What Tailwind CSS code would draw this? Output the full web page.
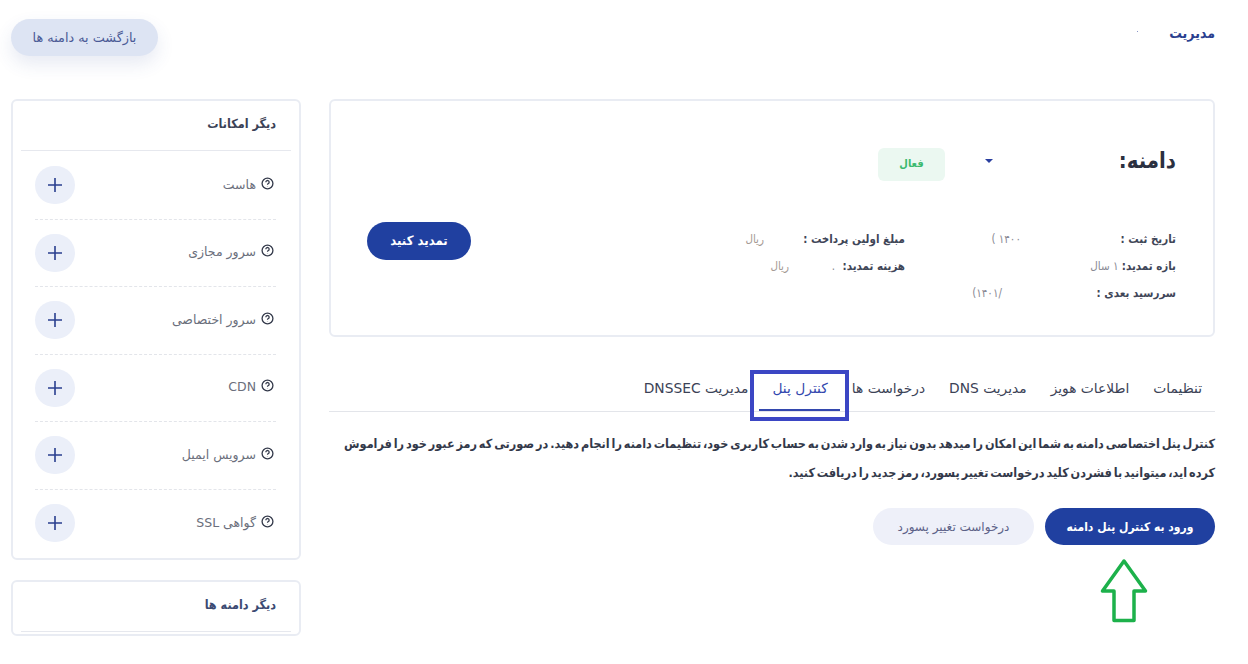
<!DOCTYPE html>
<html lang="fa" dir="rtl">
<head>
  <meta charset="UTF-8" />
  <title>مدیریت دامنه</title>
  <script src="https://cdn.jsdelivr.net/npm/@tailwindcss/browser@4"></script>
</head>
<body class="bg-white h-[664px] overflow-hidden font-['DejaVu_Sans',sans-serif] text-[#3b4256]">
  <div class="relative pr-[33px] pl-[11px]">
    <!-- Header -->
    <div class="flex items-start justify-between h-[99px] pt-[19px]">
      <div class="flex items-start gap-x-[31px]">
        <h1 class="font-['DejaVu_Sans_Condensed',sans-serif] text-[14px] font-bold text-[#2a3f8f] mt-[4px] leading-5">مدیریت</h1>
        <i class="w-px h-px bg-[#8a96c8] mt-[12px]"></i>
      </div>
      <a class="w-[147px] h-[37px] rounded-full bg-[#dde4f3] text-[#4a5a96] text-[12.800px] flex items-center justify-center shadow-[0_8px_18px_rgba(60,80,160,0.12)]">بازگشت به دامنه ها</a>
    </div>

    <div class="flex justify-between items-start">
      <!-- Main -->
      <main class="w-[886px]">
        <section class="h-[238px] border-2 border-[#e9ecf3] rounded-md pr-[37px] pl-[36px] pt-[38px]">
          <div class="flex items-center h-[44px]">
            <h2 class="font-['DejaVu_Sans_Condensed',sans-serif] text-[22px] font-bold text-[#2b3040] w-[183px] leading-8">دامنه:</h2>
            <svg class="w-2 h-1" viewBox="0 0 8 4"><path d="M0 0h8L4 4z" fill="#2a3f9f"/></svg>
            <span class="font-['DejaVu_Sans_Condensed',sans-serif] mr-[40px] mt-[7px] w-[67px] h-[33px] rounded-md bg-[#ebf8f1] text-[#3cba6f] text-[11px] font-bold flex items-center justify-center">فعال</span>
          </div>
          <div class="flex items-start mt-[47px]">
            <div class="font-['DejaVu_Sans_Condensed',sans-serif] grid grid-cols-[271px_270px] gap-y-[9px] text-[11.500px] leading-[18px] text-[#8a8a94] w-[541px]">
              <div class="flex"><b class="text-[#3f4658] w-[155px]">تاریخ ثبت :</b><span>۱۴۰۰ )</span></div>
              <div class="flex"><b class="text-[#3f4658] w-[141px]">مبلغ اولین پرداخت :</b><span class="text-[#a59a94]">ریال</span></div>
              <div><b class="text-[#3f4658]">بازه تمدید:</b> ۱ سال</div>
              <div class="flex"><b class="text-[#3f4658] w-[68px] whitespace-nowrap">هزینه تمدید:</b><span class="w-[48px] pr-[2px]">.</span><span class="text-[#a59a94]">ریال</span></div>
              <div class="flex"><b class="text-[#3f4658] w-[174px]">سررسید بعدی :</b><span>/۱۴۰۱)</span></div>
            </div>
            <button class="font-['DejaVu_Sans_Condensed',sans-serif] mr-auto mt-[-8px] w-[104px] h-[38px] rounded-full bg-[#2040a0] text-white text-[13px] font-bold">تمدید کنید</button>
          </div>
        </section>

        <!-- Tabs -->
        <nav class="relative mt-[33px] h-[42px] border-b border-[#e3e5ea] flex text-[13.800px] text-[#3b4256] pr-[13px] gap-x-[24px] leading-[37px]">
          <span>تنظیمات</span>
          <span>اطلاعات هویز</span>
          <span>مدیریت DNS</span>
          <span>درخواست ها</span>
          <span class="relative text-[#3347ae]">کنترل پنل
            <i class="absolute -right-[12px] -left-[13px] top-[39px] h-[2px] bg-[#3347ae]"></i>
            <i class="absolute -right-[21px] -left-[22px] top-0 h-[51px] border-4 border-[#3b46c4]"></i>
          </span>
          <span>مدیریت DNSSEC</span>
        </nav>

        <p class="font-['DejaVu_Sans_Condensed',sans-serif] mt-[17px] text-[12.500px] [word-spacing:-2px] font-bold leading-[29px] text-[#33394a] whitespace-nowrap">کنترل پنل اختصاصی دامنه به شما این امکان را میدهد بدون نیاز به وارد شدن به حساب کاربری خود، تنظیمات دامنه را انجام دهید. در صورتی که رمز عبور خود را فراموش<br />کرده اید، میتوانید با فشردن کلید درخواست تغییر پسورد، رمز جدید را دریافت کنید.</p>

        <div class="flex gap-x-[11px] mt-[21px]">
          <button class="font-['DejaVu_Sans_Condensed',sans-serif] w-[170px] h-[37px] rounded-full bg-[#2040a0] text-white text-[12px] font-bold">ورود به کنترل پنل دامنه</button>
          <button class="w-[161px] h-[37px] rounded-full bg-[#eef0f9] text-[#5c6288] text-[12px]">درخواست تغییر پسورد</button>
        </div>
      </main>

      <!-- Sidebar -->
      <aside class="w-[290px] flex flex-col gap-y-[20px]">
        <section class="h-[461px] border-2 border-[#e9ecf3] rounded-md px-[8px]">
          <h3 class="font-['DejaVu_Sans_Condensed',sans-serif] h-[50px] border-b border-[#e6e8ee] pr-[15px] pt-[13px] text-[12.500px] font-bold leading-5 text-[#3b4256]">دیگر امکانات</h3>
          <ul class="pr-[15px] pl-[14px] pt-px">
            <li class="h-[67.500px] border-b border-dashed border-[#e3e5ea] flex items-center justify-between">
              <span class="flex items-center gap-x-[5px] pr-[2px] text-[12.500px] text-[#6b6f7c]"><svg class="w-[13px] h-[13px] text-[#33394a] mb-1" viewBox="0 0 24 24" fill="none" stroke="currentColor" stroke-width="2.4"><circle cx="12" cy="12" r="10"/><path d="M9 9.500a3 3 0 1 1 4.500 2.600c-1 .6-1.500 1.200-1.500 2.400M12 17.500v.5"/></svg>هاست</span>
              <button class="w-10 h-[38px] rounded-full bg-[#ebeff9] flex items-center justify-center"><svg class="w-[14px] h-[14px]" viewBox="0 0 14 14"><path d="M7 0v14M0 7h14" stroke="#2a3f8f" stroke-width="1.600"/></svg></button>
            </li>
            <li class="h-[67.500px] border-b border-dashed border-[#e3e5ea] flex items-center justify-between">
              <span class="flex items-center gap-x-[5px] pr-[2px] text-[12.500px] text-[#6b6f7c]"><svg class="w-[13px] h-[13px] text-[#33394a] mb-1" viewBox="0 0 24 24" fill="none" stroke="currentColor" stroke-width="2.4"><circle cx="12" cy="12" r="10"/><path d="M9 9.500a3 3 0 1 1 4.500 2.600c-1 .6-1.500 1.200-1.500 2.400M12 17.500v.5"/></svg>سرور مجازی</span>
              <button class="w-10 h-[38px] rounded-full bg-[#ebeff9] flex items-center justify-center"><svg class="w-[14px] h-[14px]" viewBox="0 0 14 14"><path d="M7 0v14M0 7h14" stroke="#2a3f8f" stroke-width="1.600"/></svg></button>
            </li>
            <li class="h-[67.500px] border-b border-dashed border-[#e3e5ea] flex items-center justify-between">
              <span class="flex items-center gap-x-[5px] pr-[2px] text-[12.500px] text-[#6b6f7c]"><svg class="w-[13px] h-[13px] text-[#33394a] mb-1" viewBox="0 0 24 24" fill="none" stroke="currentColor" stroke-width="2.4"><circle cx="12" cy="12" r="10"/><path d="M9 9.500a3 3 0 1 1 4.500 2.600c-1 .6-1.500 1.200-1.500 2.400M12 17.500v.5"/></svg>سرور اختصاصی</span>
              <button class="w-10 h-[38px] rounded-full bg-[#ebeff9] flex items-center justify-center"><svg class="w-[14px] h-[14px]" viewBox="0 0 14 14"><path d="M7 0v14M0 7h14" stroke="#2a3f8f" stroke-width="1.600"/></svg></button>
            </li>
            <li class="h-[67.500px] border-b border-dashed border-[#e3e5ea] flex items-center justify-between">
              <span class="flex items-center gap-x-[5px] pr-[2px] text-[12.500px] text-[#6b6f7c]"><svg class="w-[13px] h-[13px] text-[#33394a] mb-1" viewBox="0 0 24 24" fill="none" stroke="currentColor" stroke-width="2.4"><circle cx="12" cy="12" r="10"/><path d="M9 9.500a3 3 0 1 1 4.500 2.600c-1 .6-1.500 1.200-1.500 2.400M12 17.500v.5"/></svg>CDN</span>
              <button class="w-10 h-[38px] rounded-full bg-[#ebeff9] flex items-center justify-center"><svg class="w-[14px] h-[14px]" viewBox="0 0 14 14"><path d="M7 0v14M0 7h14" stroke="#2a3f8f" stroke-width="1.600"/></svg></button>
            </li>
            <li class="h-[67.500px] border-b border-dashed border-[#e3e5ea] flex items-center justify-between">
              <span class="flex items-center gap-x-[5px] pr-[2px] text-[12.500px] text-[#6b6f7c]"><svg class="w-[13px] h-[13px] text-[#33394a] mb-1" viewBox="0 0 24 24" fill="none" stroke="currentColor" stroke-width="2.4"><circle cx="12" cy="12" r="10"/><path d="M9 9.500a3 3 0 1 1 4.500 2.600c-1 .6-1.500 1.200-1.500 2.400M12 17.500v.5"/></svg>سرویس ایمیل</span>
              <button class="w-10 h-[38px] rounded-full bg-[#ebeff9] flex items-center justify-center"><svg class="w-[14px] h-[14px]" viewBox="0 0 14 14"><path d="M7 0v14M0 7h14" stroke="#2a3f8f" stroke-width="1.600"/></svg></button>
            </li>
            <li class="h-[67.500px] flex items-center justify-between">
              <span class="flex items-center gap-x-[5px] pr-[2px] text-[12.500px] text-[#6b6f7c]"><svg class="w-[13px] h-[13px] text-[#33394a] mb-1" viewBox="0 0 24 24" fill="none" stroke="currentColor" stroke-width="2.4"><circle cx="12" cy="12" r="10"/><path d="M9 9.500a3 3 0 1 1 4.500 2.600c-1 .6-1.500 1.200-1.500 2.400M12 17.500v.5"/></svg>گواهی SSL</span>
              <button class="w-10 h-[38px] rounded-full bg-[#ebeff9] flex items-center justify-center"><svg class="w-[14px] h-[14px]" viewBox="0 0 14 14"><path d="M7 0v14M0 7h14" stroke="#2a3f8f" stroke-width="1.600"/></svg></button>
            </li>
          </ul>
        </section>
        <section class="h-[56px] border-2 border-[#e9ecf3] rounded-md px-[8px]">
          <h3 class="font-['DejaVu_Sans_Condensed',sans-serif] h-[50px] border-b border-[#e6e8ee] pr-[15px] pt-[13px] text-[12.500px] font-bold leading-5 text-[#3b4a72]">دیگر دامنه ها</h3>
        </section>
      </aside>
    </div>

    <!-- Annotation arrow -->
    <svg class="absolute left-[1100px] top-[558px] w-[48px] h-[66px]" viewBox="0 0 48 66" fill="none"><path d="M24 3 2.500 33H14V62.500H34V33H45.500Z" stroke="#1db14b" stroke-width="3.500" stroke-linejoin="round"/></svg>
  </div>
</body>
</html>
